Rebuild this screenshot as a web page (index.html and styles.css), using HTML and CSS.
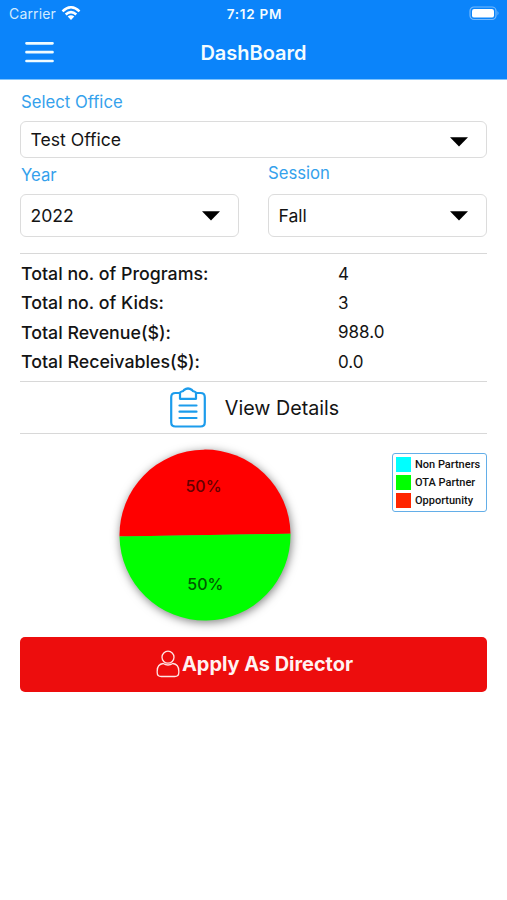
FILE: index.html
```html
<!DOCTYPE html>
<html lang="en">
<head>
<meta charset="utf-8">
<title>DashBoard</title>
<link rel="stylesheet" href="styles.css">
</head>
<body>
<header class="header">
  <div class="status">
    <div class="carrier"><span>Carrier</span>
      <svg width="20" height="15" viewBox="0 0 20 15" fill="none" stroke="#fff" stroke-width="2.5"><path d="M1.5 5.3Q10-2.7 18.500 5.300M4.700 8.500Q10 3.700 15.300 8.500"/><path d="M6.700 10.600Q10 7.900 13.300 10.600L10 14Z" fill="#fff" stroke="none"/></svg>
    </div>
    <span class="time">7:12 PM</span>
    <svg class="battery" width="31" height="15" viewBox="0 0 31 15"><rect x="1" y="1" width="26" height="12.500" rx="4" fill="none" stroke="#76b9fc" stroke-width="1.200"/><rect x="3" y="3" width="22" height="8.600" rx="2.200" fill="#fff"/><path d="M28.500 5Q30.500 7.200 28.500 9.500Z" fill="#76b9fc"/></svg>
  </div>
  <div class="nav">
    <svg class="menu" width="29" height="23" viewBox="0 0 29 23" stroke="#f0fcff" stroke-width="2.700" stroke-linecap="round"><path d="M1.500 2.300H27.500M1.500 11.200H27.500M1.500 20H27.500"/></svg>
    <h1 class="title">DashBoard</h1>
  </div>
</header>
<main class="content">
  <label class="label label-office">Select Office</label>
  <div class="select select-office"><span>Test Office</span><svg class="arrow" width="18" height="10" viewBox="0 0 18 10"><path d="M0 .3H18L9 9.600Z"/></svg></div>
  <div class="fields">
    <div><label class="label label-year">Year</label>
      <div class="select"><span>2022</span><svg class="arrow" width="18" height="10" viewBox="0 0 18 10"><path d="M0 .3H18L9 9.600Z"/></svg></div></div>
    <div><label class="label label-session">Session</label>
      <div class="select"><span>Fall</span><svg class="arrow" width="18" height="10" viewBox="0 0 18 10"><path d="M0 .3H18L9 9.600Z"/></svg></div></div>
  </div>
  <dl class="totals">
    <dt>Total no. of Programs:</dt><dd>4</dd>
    <dt>Total no. of Kids:</dt><dd>3</dd>
    <dt>Total Revenue($):</dt><dd>988.0</dd>
    <dt>Total Receivables($):</dt><dd>0.0</dd>
  </dl>
  <div class="details">
    <svg width="36" height="41" viewBox="0 0 36 41" fill="none" stroke="#1c9cec" stroke-width="2.2" stroke-linejoin="round" stroke-linecap="round"><path d="M9.500 6H5.500Q1.200 6 1.200 10.300V35.200Q1.200 39.500 5.500 39.500H30.500Q34.800 39.500 34.800 35.200V10.300Q34.800 6 30.500 6H26.500"/><path d="M10 11.800V6.500Q10 4.800 11.700 4.500Q13.300 4.300 14 3Q18 0 22 3Q22.700 4.300 24.300 4.500Q26 4.800 26 6.500V11.800Z"/><path d="M9.500 18.500H26.500M9.500 24.700H26.500M9.500 31H26.500"/></svg>
    <span>View Details</span>
  </div>
  <div class="chart">
    <svg class="pie" width="200" height="200" viewBox="0 0 200 200"><g class="slices"><path d="M14.500 101.500A85.500 85.500 0 0 1 185.500 98.700Z" fill="#f00"/><path d="M14.500 101.500A85.500 85.500 0 0 0 185.500 98.700Z" fill="#0f0"/></g><text x="98.500" y="57" fill="#630000">50%</text><text x="100.300" y="154.500" fill="#005a00">50%</text></svg>
    <ul class="legend">
      <li><i class="swatch cyan"></i><span>Non Partners</span></li>
      <li><i class="swatch green"></i><span>OTA Partner</span></li>
      <li><i class="swatch red"></i><span>Opportunity</span></li>
    </ul>
  </div>
  <button class="apply"><svg width="24" height="28" viewBox="0 0 24 28" fill="none" stroke="#ffe5e5" stroke-width="1.300"><circle cx="12" cy="7.200" r="6"/><path d="M7.200 13.500C3 14 1.200 17 1.200 21V22.500Q1.200 26.500 5.200 26.500H18.800Q22.800 26.500 22.800 22.500V21C22.800 17 21 14 16.800 13.500Q12 16.500 7.200 13.500Z"/></svg><span>Apply As Director</span></button>
</main>
</body>
</html>
```
FILE: styles.css
```css
* { box-sizing: border-box; }
body { margin: 0; background: #fff; color: #141414; font-family: Inter, "Liberation Sans", sans-serif; font-size: 17px; }
svg { display: block; flex: none; }
.header { height: 80px; background: #0b84fa; border-bottom: 1px solid #80c4fd; color: #f4fcff; }
.status { display: grid; grid-template-columns: 1fr auto 1fr; align-items: center; height: 27px; padding: 0 7px 0 9px; font-size: 13px; }
.carrier { display: flex; align-items: center; gap: 5px; font-size: 14px; letter-spacing: .15px; color: #d2ebff; }
.time { font-weight: 600; font-size: 13.5px; letter-spacing: .75px; }
.battery { justify-self: end; }
.nav { display: grid; grid-template-columns: 1fr auto 1fr; align-items: center; height: 51px; padding: 0 25px; }
.title { margin: 0; font-size: 20px; font-weight: 600; }
.content { padding: 0 20px; }
.label { display: block; height: 22px; line-height: 22px; color: #34a1ec; font-size: 16.7px; padding-left: 1px; }
.label-office { margin-top: 11px; }
.select { display: flex; align-items: center; justify-content: space-between; height: 43px; padding: 0 18.5px 0 9.5px; border: 1px solid #dcdcdc; border-radius: 6px; font-size: 17.6px; }
.select-office { height: 37px; margin-top: 8px; }
.select-office .arrow { margin-top: 4px; }
.arrow { fill: #000; }
.fields { display: grid; grid-template-columns: 219px 219px; justify-content: space-between; width: 467px; }
.label-year { margin: 6px 0 8px; }
.label-session { margin: 4px 0 10px; padding-left: 0; }
.totals { display: grid; grid-template-columns: 318px 1fr; grid-auto-rows: 29.3px; align-items: center; margin: 16px 0 0; padding: 5px 0; width: 467px; height: 128px; border-top: 1px solid #d8d8d8; }
.totals dt { font-weight: 500; font-size: 17.8px; padding-left: 1px; }
.totals dd { margin: 0; font-size: 17px; }
.details { display: flex; align-items: center; justify-content: center; gap: 19px; width: 467px; height: 53px; padding-left: 2px; border: solid #d8d8d8; border-width: 1px 0; font-size: 19.7px; }
.chart { display: flex; justify-content: space-between; align-items: flex-start; width: 467px; height: 203px; padding-left: 85px; }
.pie { margin-top: 1px; overflow: visible; }
.slices { filter: drop-shadow(1px 2px 5px rgba(0,0,0,.5)); }
.pie text { font: 500 16px Inter, sans-serif; text-anchor: middle; }
.legend { display: flex; flex-direction: column; justify-content: space-between; list-style: none; margin: 19px 0 0; width: 95px; height: 59px; padding: 3px; border: 1.5px solid #63aee8; border-radius: 3px; font: 500 11px Roboto, sans-serif; color: #111; }
.legend li { display: flex; align-items: center; gap: 4px; white-space: nowrap; }
.swatch { width: 15px; height: 15px; flex: none; }
.cyan { background: #0ff; }
.green { background: #0f0; }
.red { background: #ff2600; }
.apply { display: flex; align-items: center; justify-content: center; gap: 2px; width: 467px; height: 55px; padding: 0 0 1px 2px; border: 0; border-radius: 5px; background: #ed0d0d; color: #fff2f2; font: 700 19.9px Inter, sans-serif; }
```
